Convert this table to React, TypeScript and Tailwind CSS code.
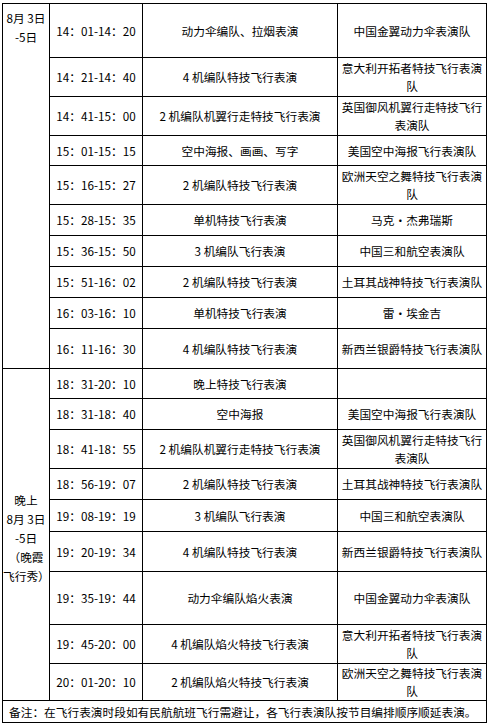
type Row = { time: string; act: string; team: string[]; h: string }

const day: Row[] = [
  { time: '14：01-14：20', act: '动力伞编队、拉烟表演', team: ['中国金翼动力伞表演队'], h: 'h-[54px]' },
  { time: '14：21-14：40', act: '4 机编队特技飞行表演', team: ['意大利开拓者特技飞行表演', '队'], h: 'h-[39px]' },
  { time: '14：41-15：00', act: '2 机编队机翼行走特技飞行表演', team: ['英国御风机翼行走特技飞行', '表演队'], h: 'h-[39px]' },
  { time: '15：01-15：15', act: '空中海报、画画、写字', team: ['美国空中海报飞行表演队'], h: 'h-[30px]' },
  { time: '15：16-15：27', act: '2 机编队特技飞行表演', team: ['欧洲天空之舞特技飞行表演', '队'], h: 'h-[39px]' },
  { time: '15：28-15：35', act: '单机特技飞行表演', team: ['马克・杰弗瑞斯'], h: 'h-[31px]' },
  { time: '15：36-15：50', act: '3 机编队飞行表演', team: ['中国三和航空表演队'], h: 'h-[31px]' },
  { time: '15：51-16：02', act: '2 机编队特技飞行表演', team: ['土耳其战神特技飞行表演队'], h: 'h-[31px]' },
  { time: '16：03-16：10', act: '单机特技飞行表演', team: ['雷・埃金吉'], h: 'h-[31px]' },
  { time: '16：11-16：30', act: '4 机编队特技飞行表演', team: ['新西兰银爵特技飞行表演队'], h: 'h-[40px]' },
]

const night: Row[] = [
  { time: '18：31-20：10', act: '晚上特技飞行表演', team: [], h: 'h-[30px]' },
  { time: '18：31-18：40', act: '空中海报', team: ['美国空中海报飞行表演队'], h: 'h-[31px]' },
  { time: '18：41-18：55', act: '2 机编队机翼行走特技飞行表演', team: ['英国御风机翼行走特技飞行', '表演队'], h: 'h-[39px]' },
  { time: '18：56-19：07', act: '2 机编队特技飞行表演', team: ['土耳其战神特技飞行表演队'], h: 'h-[31px]' },
  { time: '19：08-19：19', act: '3 机编队飞行表演', team: ['中国三和航空表演队'], h: 'h-[32px]' },
  { time: '19：20-19：34', act: '4 机编队特技飞行表演', team: ['新西兰银爵特技飞行表演队'], h: 'h-[40px]' },
  { time: '19：35-19：44', act: '动力伞编队焰火表演', team: ['中国金翼动力伞表演队'], h: 'h-[53px]' },
  { time: '19：45-20：00', act: '4 机编队焰火特技飞行表演', team: ['意大利开拓者特技飞行表演', '队'], h: 'h-[39px]' },
  { time: '20：01-20：10', act: '2 机编队焰火特技飞行表演', team: ['欧洲天空之舞特技飞行表演', '队'], h: 'h-[37px]' },
]

const cell = 'border border-black p-0 text-center align-middle'

function Cells({ r }: { r: Row }) {
  return (
    <>
      <td className={cell}>{r.time}</td>
      <td className={cell + ' whitespace-nowrap'}>{r.act}</td>
      <td className={cell + ' leading-[18px] whitespace-nowrap'}>
        {r.team.map((t, i) => (
          <div key={i}>{t}</div>
        ))}
      </td>
    </>
  )
}

export default function App() {
  return (
    <div className="w-[490px] h-[724px] bg-white pt-[3px] pl-[2px] text-black text-[11.7px] font-['Noto_Sans_CJK_SC',sans-serif]">
      <table className="w-[484px] table-fixed border-collapse">
        <colgroup>
          <col className="w-[47px]" />
          <col className="w-[93px]" />
          <col className="w-[195px]" />
          <col className="w-[149px]" />
        </colgroup>
        <tbody>
          {day.map((r, i) => (
            <tr key={r.time} className={r.h}>
              {i === 0 && (
                <td rowSpan={day.length} className="border border-black p-0 pt-[4px] text-center align-top leading-[19px] whitespace-nowrap">
                  <div>8月 3日</div>
                  <div>-5日</div>
                </td>
              )}
              <Cells r={r} />
            </tr>
          ))}
          {night.map((r, i) => (
            <tr key={'n' + r.time} className={r.h}>
              {i === 0 && (
                <td rowSpan={night.length} className="border border-black p-0 pt-[6px] text-center align-middle leading-[19px] whitespace-nowrap">
                  <div>晚上</div>
                  <div>8月 3日</div>
                  <div>-5日</div>
                  <div>（晚霞</div>
                  <div>飞行秀）</div>
                </td>
              )}
              <Cells r={r} />
            </tr>
          ))}
          <tr className="h-[22px]">
            <td colSpan={4} className="border border-black p-0 pl-[6px] text-left align-middle whitespace-nowrap">
              备注：在飞行表演时段如有民航航班飞行需避让，各飞行表演队按节目编排顺序顺延表演。
            </td>
          </tr>
        </tbody>
      </table>
    </div>
  )
}
